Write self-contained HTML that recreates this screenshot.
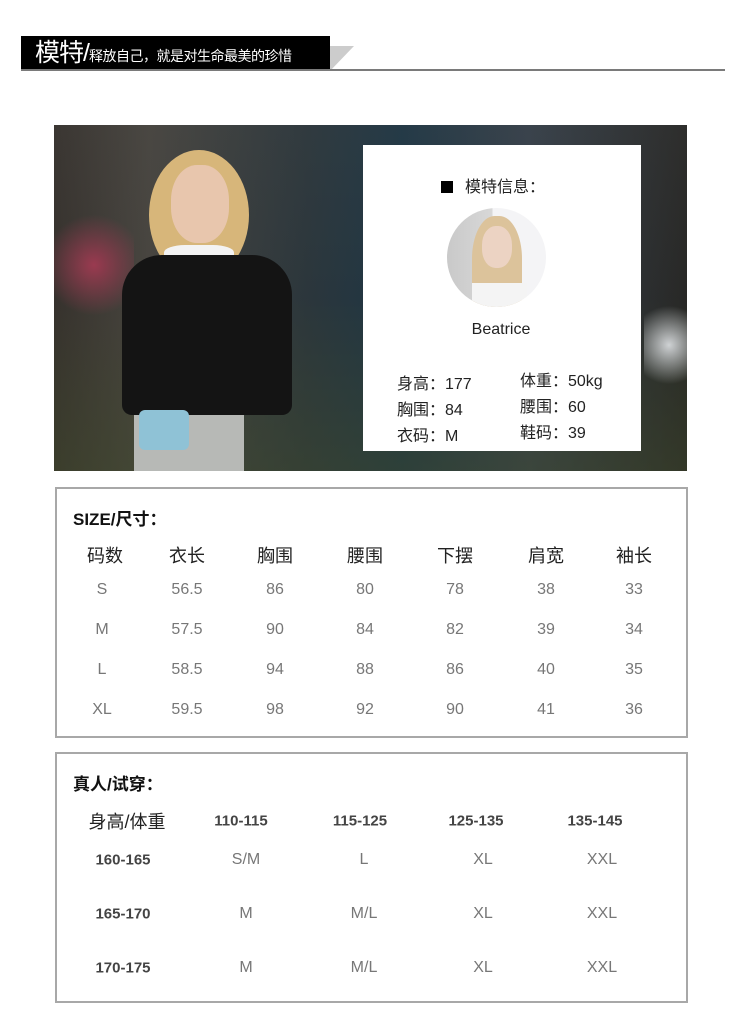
<!DOCTYPE html>
<html><head><meta charset="utf-8"><style>
*{margin:0;padding:0;box-sizing:border-box}
body{width:750px;height:1019px;background:#fff;position:relative;overflow:hidden;font-family:"Liberation Sans","Noto Sans CJK SC",sans-serif;color:#222}
.a{position:absolute;white-space:nowrap}
.c{transform:translate(-50%,-50%)}
.box{position:absolute;border:2px solid #a8a8a8;background:#fff}
.g{color:#777;font-size:16px}
.h{color:#222;font-size:18px}
.b{font-weight:bold;color:#444;font-size:15px}
</style></head><body>
<div class="a" style="left:21px;top:36px;width:309px;height:35px;background:#000"></div>
<div class="a" style="left:330px;top:46px;width:24px;height:25px;background:#ccc;clip-path:polygon(0 0,100% 0,0 100%)"></div>
<div class="a" style="left:21px;top:69px;width:704px;height:2px;background:#7a7a7a"></div>
<div class="a" style="left:35px;top:36px;color:#fff;font-size:25px;line-height:35px;letter-spacing:-1px">模特/<span style="font-size:14px;letter-spacing:-0.5px">释放自己，就是对生命最美的珍惜</span></div>

<div class="a" style="left:54px;top:125px;width:633px;height:346px;overflow:hidden;background:linear-gradient(90deg,#3a3530 0%,#4d4a44 15%,#2e3a40 40%,#1f3a4a 55%,#3a4550 75%,#2a2a28 100%)">
 <div class="a" style="left:0;top:0;width:633px;height:346px;background:linear-gradient(180deg,rgba(60,60,60,.2) 0%,rgba(20,20,20,.1) 50%,rgba(60,70,40,.5) 100%)"></div>
 <div class="a" style="left:0;top:80px;width:80px;height:120px;background:radial-gradient(circle,#9a3a50 0%,rgba(120,60,80,0) 70%)"></div>
 <div class="a" style="left:590px;top:170px;width:50px;height:100px;background:radial-gradient(circle,#cfd2d4 0%,rgba(200,200,200,0) 70%)"></div>
 <div class="a" style="left:95px;top:25px;width:100px;height:130px;border-radius:50%;background:#d7b67a"></div>
 <div class="a" style="left:117px;top:40px;width:58px;height:78px;border-radius:45%;background:#e8c6ad"></div>
 <div class="a" style="left:110px;top:120px;width:70px;height:25px;border-radius:30%;background:#f3f3f3"></div>
 <div class="a" style="left:68px;top:130px;width:170px;height:160px;border-radius:40px 40px 10px 10px;background:#141414"></div>
 <div class="a" style="left:80px;top:290px;width:110px;height:60px;background:#b7b9b6"></div>
 <div class="a" style="left:85px;top:285px;width:50px;height:40px;border-radius:6px;background:#8fc2d6"></div>
</div>
<div class="a" style="left:363px;top:145px;width:278px;height:306px;background:#fff"></div>
<div class="a" style="left:441px;top:181px;width:12px;height:12px;background:#000"></div>
<div class="a" style="left:465px;top:178px;font-size:16px;line-height:20px">模特信息：</div>
<div class="a" style="left:447px;top:208px;width:99px;height:99px;border-radius:50%;background:linear-gradient(90deg,#c9c9c9 0%,#d8d8d8 46%,#f4f4f6 46%);overflow:hidden">
 <div class="a" style="left:25px;top:8px;width:50px;height:95px;border-radius:45% 45% 10% 10%;background:#dcc39b"></div>
 <div class="a" style="left:35px;top:18px;width:30px;height:42px;border-radius:45%;background:#ecd3c3"></div>
 <div class="a" style="left:25px;top:75px;width:55px;height:30px;background:#f4f4f4"></div>
</div>
<div class="a c" style="left:501px;top:330px;font-size:16px">Beatrice</div>
<div class="a" style="left:397px;top:372px;font-size:16px;line-height:26px">身高：177<br>胸围：84<br>衣码：M</div>
<div class="a" style="left:520px;top:369px;font-size:16px;line-height:26px">体重：50kg<br>腰围：60<br>鞋码：39</div>

<div class="box" style="left:55px;top:487px;width:633px;height:251px"></div>
<div class="a" style="left:73px;top:505px;font-size:17px;font-weight:bold;color:#111">SIZE/尺寸：</div>
<div class="a c h" style="left:105px;top:555px">码数</div><div class="a c h" style="left:187px;top:555px">衣长</div><div class="a c h" style="left:275px;top:555px">胸围</div><div class="a c h" style="left:365px;top:555px">腰围</div><div class="a c h" style="left:455px;top:555px">下摆</div><div class="a c h" style="left:546px;top:555px">肩宽</div><div class="a c h" style="left:634px;top:555px">袖长</div>
<div class="a c g" style="left:102px;top:590px">S</div><div class="a c g" style="left:187px;top:590px">56.5</div><div class="a c g" style="left:275px;top:590px">86</div><div class="a c g" style="left:365px;top:590px">80</div><div class="a c g" style="left:455px;top:590px">78</div><div class="a c g" style="left:546px;top:590px">38</div><div class="a c g" style="left:634px;top:590px">33</div>
<div class="a c g" style="left:102px;top:630px">M</div><div class="a c g" style="left:187px;top:630px">57.5</div><div class="a c g" style="left:275px;top:630px">90</div><div class="a c g" style="left:365px;top:630px">84</div><div class="a c g" style="left:455px;top:630px">82</div><div class="a c g" style="left:546px;top:630px">39</div><div class="a c g" style="left:634px;top:630px">34</div>
<div class="a c g" style="left:102px;top:670px">L</div><div class="a c g" style="left:187px;top:670px">58.5</div><div class="a c g" style="left:275px;top:670px">94</div><div class="a c g" style="left:365px;top:670px">88</div><div class="a c g" style="left:455px;top:670px">86</div><div class="a c g" style="left:546px;top:670px">40</div><div class="a c g" style="left:634px;top:670px">35</div>
<div class="a c g" style="left:102px;top:710px">XL</div><div class="a c g" style="left:187px;top:710px">59.5</div><div class="a c g" style="left:275px;top:710px">98</div><div class="a c g" style="left:365px;top:710px">92</div><div class="a c g" style="left:455px;top:710px">90</div><div class="a c g" style="left:546px;top:710px">41</div><div class="a c g" style="left:634px;top:710px">36</div>

<div class="box" style="left:55px;top:752px;width:633px;height:251px"></div>
<div class="a" style="left:73px;top:770px;font-size:17px;font-weight:bold;color:#111">真人/试穿：</div>
<div class="a c h" style="left:127px;top:821px">身高/体重</div><div class="a c b" style="left:241px;top:821px">110-115</div><div class="a c b" style="left:360px;top:821px">115-125</div><div class="a c b" style="left:476px;top:821px">125-135</div><div class="a c b" style="left:595px;top:821px">135-145</div>
<div class="a c b" style="left:123px;top:860px">160-165</div><div class="a c g" style="left:246px;top:860px">S/M</div><div class="a c g" style="left:364px;top:860px">L</div><div class="a c g" style="left:483px;top:860px">XL</div><div class="a c g" style="left:602px;top:860px">XXL</div>
<div class="a c b" style="left:123px;top:914px">165-170</div><div class="a c g" style="left:246px;top:914px">M</div><div class="a c g" style="left:364px;top:914px">M/L</div><div class="a c g" style="left:483px;top:914px">XL</div><div class="a c g" style="left:602px;top:914px">XXL</div>
<div class="a c b" style="left:123px;top:968px">170-175</div><div class="a c g" style="left:246px;top:968px">M</div><div class="a c g" style="left:364px;top:968px">M/L</div><div class="a c g" style="left:483px;top:968px">XL</div><div class="a c g" style="left:602px;top:968px">XXL</div>
</body></html>
